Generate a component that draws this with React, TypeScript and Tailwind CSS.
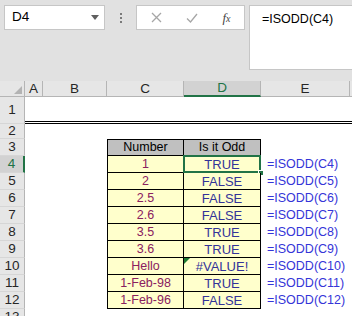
import React from 'react';

const rows = [
  { n: 4, c: '1', d: 'TRUE' },
  { n: 5, c: '2', d: 'FALSE' },
  { n: 6, c: '2.5', d: 'FALSE' },
  { n: 7, c: '2.6', d: 'FALSE' },
  { n: 8, c: '3.5', d: 'TRUE' },
  { n: 9, c: '3.6', d: 'TRUE' },
  { n: 10, c: 'Hello', d: '#VALUE!' },
  { n: 11, c: '1-Feb-98', d: 'TRUE' },
  { n: 12, c: '1-Feb-96', d: 'FALSE' },
];

function RowHead({ n, active, className = '' }: { n: number; active?: boolean; className?: string }) {
  return (
    <div
      className={`w-[25px] shrink-0 flex items-center justify-center border-b border-[#d6d6d6] text-[13.5px] ${
        active ? 'bg-[#d2d2d2] text-[#217346] border-r-2 border-r-[#217346]' : 'bg-[#e6e6e6] text-[#262626] border-r border-r-[#b5b5b5]'
      } ${className}`}
    >
      {n}
    </div>
  );
}

export default function App() {
  return (
    <div className="w-[352px] h-[316px] overflow-hidden bg-white font-['Liberation_Sans',Arial,sans-serif]">
      {/* formula bar area */}
      <div className="h-[81px] bg-[#e1e1e1] flex items-start pt-[5px] pl-[4px]">
        <div className="w-[101px] h-[25px] bg-white border border-[#c6c6c6] flex items-center pl-[7px] pr-[5px] text-[13.5px] text-black">
          <span className="flex-1">D4</span>
          <svg width="8" height="5" viewBox="0 0 8 5">
            <path d="M0 0h8L4 5z" fill="#5f5f5f" />
          </svg>
        </div>
        <div className="w-[31px] h-[25px] flex flex-col items-center justify-center gap-[2px]">
          <span className="w-[2px] h-[2px] bg-[#7a7a7a]" />
          <span className="w-[2px] h-[2px] bg-[#7a7a7a]" />
          <span className="w-[2px] h-[2px] bg-[#7a7a7a]" />
        </div>
        <div className="w-[109px] h-[25px] bg-white border border-[#c6c6c6] flex items-center">
          <div className="w-[38px] flex justify-center">
            <svg width="11" height="11" viewBox="0 0 11 11">
              <path d="M1 1l9 9M10 1l-9 9" stroke="#a6a6a6" strokeWidth="1.3" />
            </svg>
          </div>
          <div className="w-[34px] flex justify-center">
            <svg width="12" height="10" viewBox="0 0 12 10">
              <path d="M1 5.5l3.5 3.5L11 1" stroke="#a6a6a6" strokeWidth="1.3" fill="none" />
            </svg>
          </div>
          <div className="flex-1 flex justify-center text-[13px] italic text-[#444] font-['Liberation_Serif',serif]">
            f<span className="text-[10px] mt-[3px]">x</span>
          </div>
        </div>
        <div className="ml-[4px] flex-1 h-[65px] bg-white border border-r-0 border-[#c6c6c6] pl-[12px] pt-[4px] text-[12.5px] text-black">
          =ISODD(C4)
        </div>
      </div>

      {/* column headers */}
      <div className="flex h-[16px] text-[13.5px] leading-none">
        <div className="w-[25px] shrink-0 bg-[#e6e6e6] border-b border-r border-[#b5b5b5] relative">
          <svg className="absolute left-[14px] top-[5px]" width="8" height="8" viewBox="0 0 8 8">
            <path d="M8 0v8H0z" fill="#b3b3b3" />
          </svg>
        </div>
        <div className="w-[18px] shrink-0 bg-[#e6e6e6] border-b border-r border-[#b5b5b5] flex items-center justify-center text-[#262626]">A</div>
        <div className="w-[64px] shrink-0 bg-[#e6e6e6] border-b border-r border-[#b5b5b5] flex items-center justify-center text-[#262626]">B</div>
        <div className="w-[77px] shrink-0 bg-[#e6e6e6] border-b border-r border-[#b5b5b5] flex items-center justify-center text-[#262626]">C</div>
        <div className="w-[77px] shrink-0 bg-[#d2d2d2] border-b-2 border-b-[#217346] border-r border-r-[#b5b5b5] flex items-center justify-center text-[#217346]">D</div>
        <div className="w-[89px] shrink-0 bg-[#e6e6e6] border-b border-r border-[#b5b5b5] flex items-center justify-center text-[#262626]">E</div>
        <div className="flex-1 bg-[#e6e6e6] border-b border-[#b5b5b5]" />
      </div>

      <div className="text-[13px] leading-none">
        {/* row 1 with double bottom border */}
        <div className="flex h-[27px]">
          <RowHead n={1} />
          <div className="flex-1 border-b-[3px] border-double border-black" />
        </div>
        {/* row 2 */}
        <div className="flex h-[15px]">
          <RowHead n={2} />
          <div className="flex-1" />
        </div>
        {/* row 3 headers */}
        <div className="flex h-[17px]">
          <RowHead n={3} />
          <div className="w-[82px] shrink-0" />
          <div className="w-[77px] shrink-0 bg-[#c0c0c0] border border-black flex items-center justify-center text-[12.5px] text-black">
            Number
          </div>
          <div className="w-[77px] shrink-0 bg-[#c0c0c0] border-y border-r border-black flex items-center justify-center text-[12.5px] text-black">
            Is it Odd
          </div>
        </div>
        {rows.map((r) => {
          const active = r.n === 4;
          return (
            <div key={r.n} className="flex h-[17px]">
              <RowHead n={r.n} active={active} />
              <div className="w-[82px] shrink-0" />
              <div className="w-[77px] shrink-0 bg-[#ffffcc] border-x border-b border-black flex items-center justify-center text-[12.5px] text-[#8a2060]">
                {r.c}
              </div>
              <div className="w-[77px] shrink-0 bg-[#ffffcc] border-r border-b border-black flex items-center justify-center text-[13px] text-[#333399] relative">
                {r.d}
                {r.d === '#VALUE!' && (
                  <svg className="absolute left-0 top-0" width="6" height="6" viewBox="0 0 6 6">
                    <path d="M0 0h6L0 6z" fill="#1e7b34" />
                  </svg>
                )}
                {active && (
                  <>
                    <div className="absolute -left-px -top-px w-[78px] h-[18px] border-2 border-[#217346]" />
                    <div className="absolute right-[-4px] bottom-[-4px] w-[6px] h-[6px] bg-[#217346] border border-white" />
                  </>
                )}
              </div>
              <div className="pl-[6px] flex items-center text-[12.5px] text-[#3535d8]">=ISODD(C{r.n})</div>
            </div>
          );
        })}
        <div className="flex h-[17px]">
          <RowHead n={13} />
          <div className="flex-1" />
        </div>
      </div>
    </div>
  );
}
